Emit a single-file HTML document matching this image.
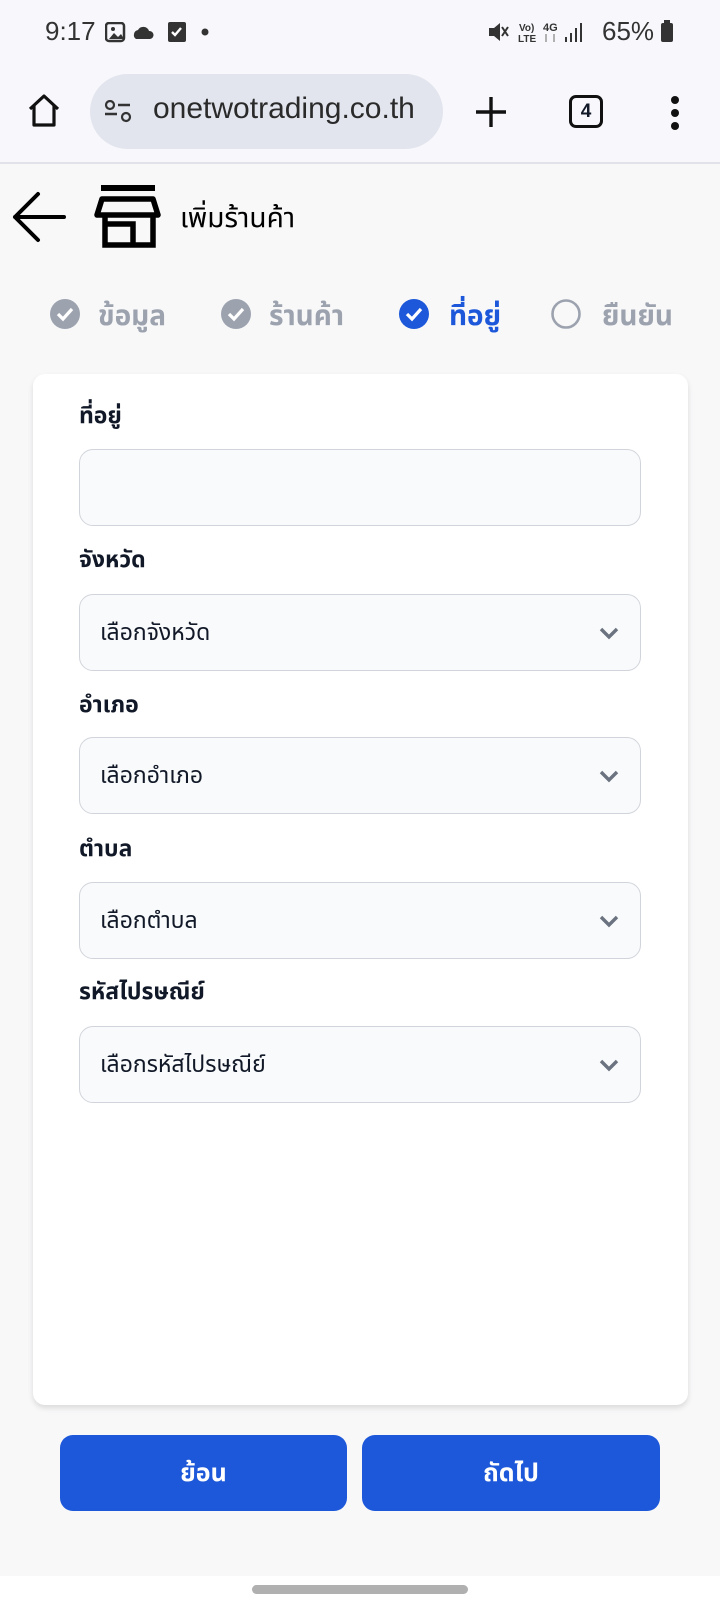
<!DOCTYPE html>
<html><head><meta charset="utf-8"><style>
*{margin:0;padding:0;box-sizing:border-box}
body{width:720px;height:1600px;background:#f8f8f9;font-family:"Liberation Sans","Noto Sans Thai","Tlwg Typo","Garuda",sans-serif;position:relative;overflow:hidden;color:#111827}
.abs{position:absolute}
.status{top:0;left:0;width:720px;height:164px;background:#f8f8fc;border-bottom:2px solid #e2e2ea}
.lbl{position:absolute;left:79px;font-size:23px;font-weight:bold;color:#111827}
.field{position:absolute;left:79px;width:562px;height:77px;background:#f9fafb;border:1px solid #d1d5db;border-radius:14px;font-size:23px;color:#111827;padding-left:20px;line-height:75px}
.chev{position:absolute;right:20px;top:30px}
.step{position:absolute;top:295px;font-size:28px;font-weight:bold;color:#9ca3af}
.btn{position:absolute;top:1435px;height:76px;background:#1c58d9;border-radius:13px;color:#fff;font-size:25px;font-weight:bold;text-align:center;line-height:76px}
</style></head><body>
<div class="abs status">
 <div class="abs" style="left:45px;top:16px;font-size:26px;color:#333">9:17</div>
 <svg class="abs" style="left:105px;top:22px" width="108" height="24"><rect x="1" y="1" width="18" height="18" rx="3" fill="none" stroke="#333" stroke-width="2.5"/><path d="M4 17l5-6 4 4 3-3 3 5z" fill="#333"/><circle cx="8" cy="7" r="2" fill="#333"/><path d="M31 17a5 5 0 0 1 2-9a6 6 0 0 1 11 1a4 4 0 0 1 1 8z" fill="#333"/><rect x="63" y="0" width="18" height="20" rx="2" fill="#333"/><path d="M67 10l3 3 6-7" stroke="#fff" stroke-width="2.4" fill="none"/><circle cx="100" cy="10" r="3.5" fill="#333"/></svg>
 <svg class="abs" style="left:487px;top:20px" width="98" height="26"><path d="M2 8h5l6-5v18l-6-5H2z" fill="#333"/><path d="M15 7l6 9M21 7l-6 9" stroke="#333" stroke-width="2"/><text x="32" y="11" font-size="10" font-family="Liberation Sans" fill="#333" font-weight="bold">Vo)</text><text x="31" y="22" font-size="10" font-family="Liberation Sans" fill="#333" font-weight="bold">LTE</text><text x="56" y="11" font-size="11" font-family="Liberation Sans" fill="#333" font-weight="bold">4G</text><path d="M59 14v8M67 14v8" stroke="#999" stroke-width="1.5"/><rect x="78" y="17" width="2" height="5" fill="#333"/><rect x="83" y="13" width="2" height="9" fill="#333"/><rect x="88" y="8" width="2" height="14" fill="#333"/><rect x="93" y="3" width="2" height="19" fill="#333"/></svg>
 <div class="abs" style="left:602px;top:16px;font-size:26px;color:#333">65%</div>
 <svg class="abs" style="left:660px;top:20px" width="16" height="24"><rect x="4" y="0" width="6" height="3" fill="#333"/><rect x="1" y="3" width="12" height="19" rx="2" fill="#333"/></svg>
 <svg class="abs" style="left:26px;top:92px" width="38" height="38"><path d="M4 17L18 4l14 13M8 14v19h20V14" fill="none" stroke="#111" stroke-width="3.2" stroke-linejoin="round"/></svg>
 <div class="abs" style="left:90px;top:74px;width:353px;height:75px;border-radius:38px;background:#e2e5ee"></div>
 <svg class="abs" style="left:104px;top:100px" width="30" height="26"><circle cx="6" cy="5" r="4" fill="none" stroke="#333" stroke-width="2.2"/><path d="M1 14h12M14 5h12" stroke="#333" stroke-width="2.5"/><circle cx="22" cy="17" r="4" fill="none" stroke="#333" stroke-width="2.2"/></svg>
 <div class="abs" style="left:153px;top:92px;font-size:30px;color:#2a2a2a">onetwotrading.co.th</div>
 <svg class="abs" style="left:474px;top:95px" width="34" height="34"><path d="M17 2v30M2 17h30" stroke="#111" stroke-width="3.4"/></svg>
 <div class="abs" style="left:569px;top:95px;width:34px;height:33px;border:3.2px solid #111;border-radius:7px;font-size:19px;font-weight:bold;text-align:center;line-height:27px">4</div>
 <svg class="abs" style="left:669px;top:95px" width="12" height="36"><circle cx="6" cy="5" r="4" fill="#111"/><circle cx="6" cy="18" r="4" fill="#111"/><circle cx="6" cy="31" r="4" fill="#111"/></svg>
</div>
<svg class="abs" style="left:10px;top:190px" width="60" height="55"><path d="M54 27H5M28 4L5 27l23 23" fill="none" stroke="#000" stroke-width="4" stroke-linecap="round" stroke-linejoin="round"/></svg>
<svg class="abs" style="left:94px;top:185px" width="68" height="63"><rect x="7" y="0" width="54" height="6" fill="#000"/><path d="M8 14h51l5 16H3z" fill="none" stroke="#000" stroke-width="5.5" stroke-linejoin="round"/><path d="M11 30v30h48V30M11 42v2" stroke="#000" stroke-width="5.5" fill="none"/><path d="M11 39h28v21" stroke="#000" stroke-width="5.5" fill="none"/></svg>
<div class="abs" style="left:180px;top:197px;font-size:28px;color:#000">เพิ่มร้านค้า</div>
<svg class="abs" style="left:49px;top:298px" width="32" height="32"><circle cx="16" cy="16" r="15" fill="#9ca3af"/><path d="M9 16l5 5 9-10" stroke="#fff" stroke-width="3.2" fill="none"/></svg>
<div class="step" style="left:98px">ข้อมูล</div>
<svg class="abs" style="left:220px;top:298px" width="32" height="32"><circle cx="16" cy="16" r="15" fill="#9ca3af"/><path d="M9 16l5 5 9-10" stroke="#fff" stroke-width="3.2" fill="none"/></svg>
<div class="step" style="left:269px">ร้านค้า</div>
<svg class="abs" style="left:398px;top:298px" width="32" height="32"><circle cx="16" cy="16" r="15" fill="#1c58d9"/><path d="M9 16l5 5 9-10" stroke="#fff" stroke-width="3.2" fill="none"/></svg>
<div class="step" style="left:449px;color:#1c58d9">ที่อยู่</div>
<svg class="abs" style="left:550px;top:298px" width="32" height="32"><circle cx="16" cy="16" r="13.5" fill="none" stroke="#9ca3af" stroke-width="2.6"/></svg>
<div class="step" style="left:602px">ยืนยัน</div>
<div class="abs" style="left:33px;top:374px;width:655px;height:1031px;background:#fff;border-radius:12px;box-shadow:0 3px 6px rgba(0,0,0,0.12)"></div>
<div class="lbl" style="top:400px">ที่อยู่</div>
<div class="field" style="top:449px"></div>
<div class="lbl" style="top:544px">จังหวัด</div>
<div class="field" style="top:594px">เลือกจังหวัด<svg class="chev" width="22" height="16"><path d="M3 4l8 8 8-8" stroke="#6b7280" stroke-width="3.4" fill="none"/></svg></div>
<div class="lbl" style="top:689px">อำเภอ</div>
<div class="field" style="top:737px">เลือกอำเภอ<svg class="chev" width="22" height="16"><path d="M3 4l8 8 8-8" stroke="#6b7280" stroke-width="3.4" fill="none"/></svg></div>
<div class="lbl" style="top:833px">ตำบล</div>
<div class="field" style="top:882px">เลือกตำบล<svg class="chev" width="22" height="16"><path d="M3 4l8 8 8-8" stroke="#6b7280" stroke-width="3.4" fill="none"/></svg></div>
<div class="lbl" style="top:976px">รหัสไปรษณีย์</div>
<div class="field" style="top:1026px">เลือกรหัสไปรษณีย์<svg class="chev" width="22" height="16"><path d="M3 4l8 8 8-8" stroke="#6b7280" stroke-width="3.4" fill="none"/></svg></div>
<div class="btn" style="left:60px;width:287px">ย้อน</div>
<div class="btn" style="left:362px;width:298px">ถัดไป</div>
<div class="abs" style="left:0;top:1576px;width:720px;height:24px;background:#fff"></div>
<div class="abs" style="left:252px;top:1585px;width:216px;height:9px;border-radius:5px;background:#b0b0b0"></div>
</body></html>
